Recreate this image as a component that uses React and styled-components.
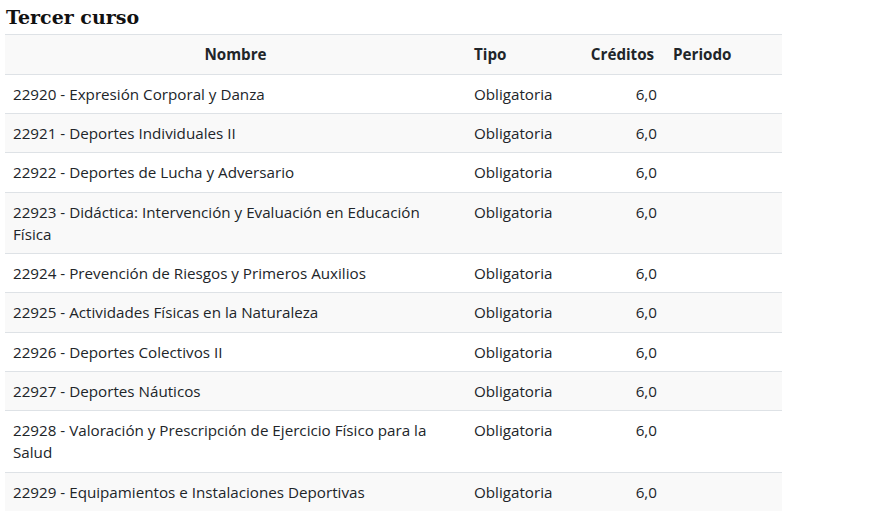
import styled, { createGlobalStyle } from 'styled-components';

const GlobalStyle = createGlobalStyle`
  body {
    margin: 0;
    background: #ffffff;
    font-family: "Open Sans", "Noto Sans", sans-serif;
    color: #212529;
  }
`;

const subjects = [
  { code: '22920', name: 'Expresión Corporal y Danza' },
  { code: '22921', name: 'Deportes Individuales II' },
  { code: '22922', name: 'Deportes de Lucha y Adversario' },
  { code: '22923', name: 'Didáctica: Intervención y Evaluación en Educación Física' },
  { code: '22924', name: 'Prevención de Riesgos y Primeros Auxilios' },
  { code: '22925', name: 'Actividades Físicas en la Naturaleza' },
  { code: '22926', name: 'Deportes Colectivos II' },
  { code: '22927', name: 'Deportes Náuticos' },
  { code: '22928', name: 'Valoración y Prescripción de Ejercicio Físico para la Salud' },
  { code: '22929', name: 'Equipamientos e Instalaciones Deportivas' },
];

export default function App() {
  return (
    <>
      <GlobalStyle />
      <Page>
        <Title>Tercer curso</Title>
        <Table>
          <colgroup>
            <col style={{ width: 461 }} />
            <col style={{ width: 114 }} />
            <col style={{ width: 85 }} />
            <col style={{ width: 117 }} />
          </colgroup>
          <thead>
            <tr>
              <Th align="center">Nombre</Th>
              <Th>Tipo</Th>
              <Th align="center">Créditos</Th>
              <Th>Periodo</Th>
            </tr>
          </thead>
          <tbody>
            {subjects.map((s, i) => (
              <Row key={s.code} $striped={i % 2 === 1}>
                <Td>{s.code} - {s.name}</Td>
                <Td>Obligatoria</Td>
                <Td align="right">6,0</Td>
                <Td></Td>
              </Row>
            ))}
          </tbody>
        </Table>
      </Page>
    </>
  );
}

const Page = styled.div`
  padding: 5px 0 0 5px;
`;

const Title = styled.h2`
  margin: 0 0 5px 1px;
  font-family: "DejaVu Serif", Georgia, serif;
  font-size: 19px;
  font-weight: bold;
  color: #111;
  line-height: 24px;
`;

const Table = styled.table`
  width: 777px;
  border-collapse: collapse;
  table-layout: fixed;
  font-size: 15.2px;
`;

const Th = styled.th`
  text-align: ${(p) => p.align || 'left'};
  background: #f9f9f9;
  font-weight: bold;
  padding: 8px;
  line-height: 23px;
  border-top: 1px solid #dee2e6;
  border-bottom: 1px solid #dee2e6;
  white-space: nowrap;
`;

const Row = styled.tr`
  background: ${(p) => (p.$striped ? '#f9f9f9' : '#ffffff')};
`;

const Td = styled.td`
  text-align: ${(p) => p.align || 'left'};
  vertical-align: top;
  padding: 8px 8px 7.8px;
  line-height: 22.4px;
  border-top: 1px solid #dee2e6;
`;
